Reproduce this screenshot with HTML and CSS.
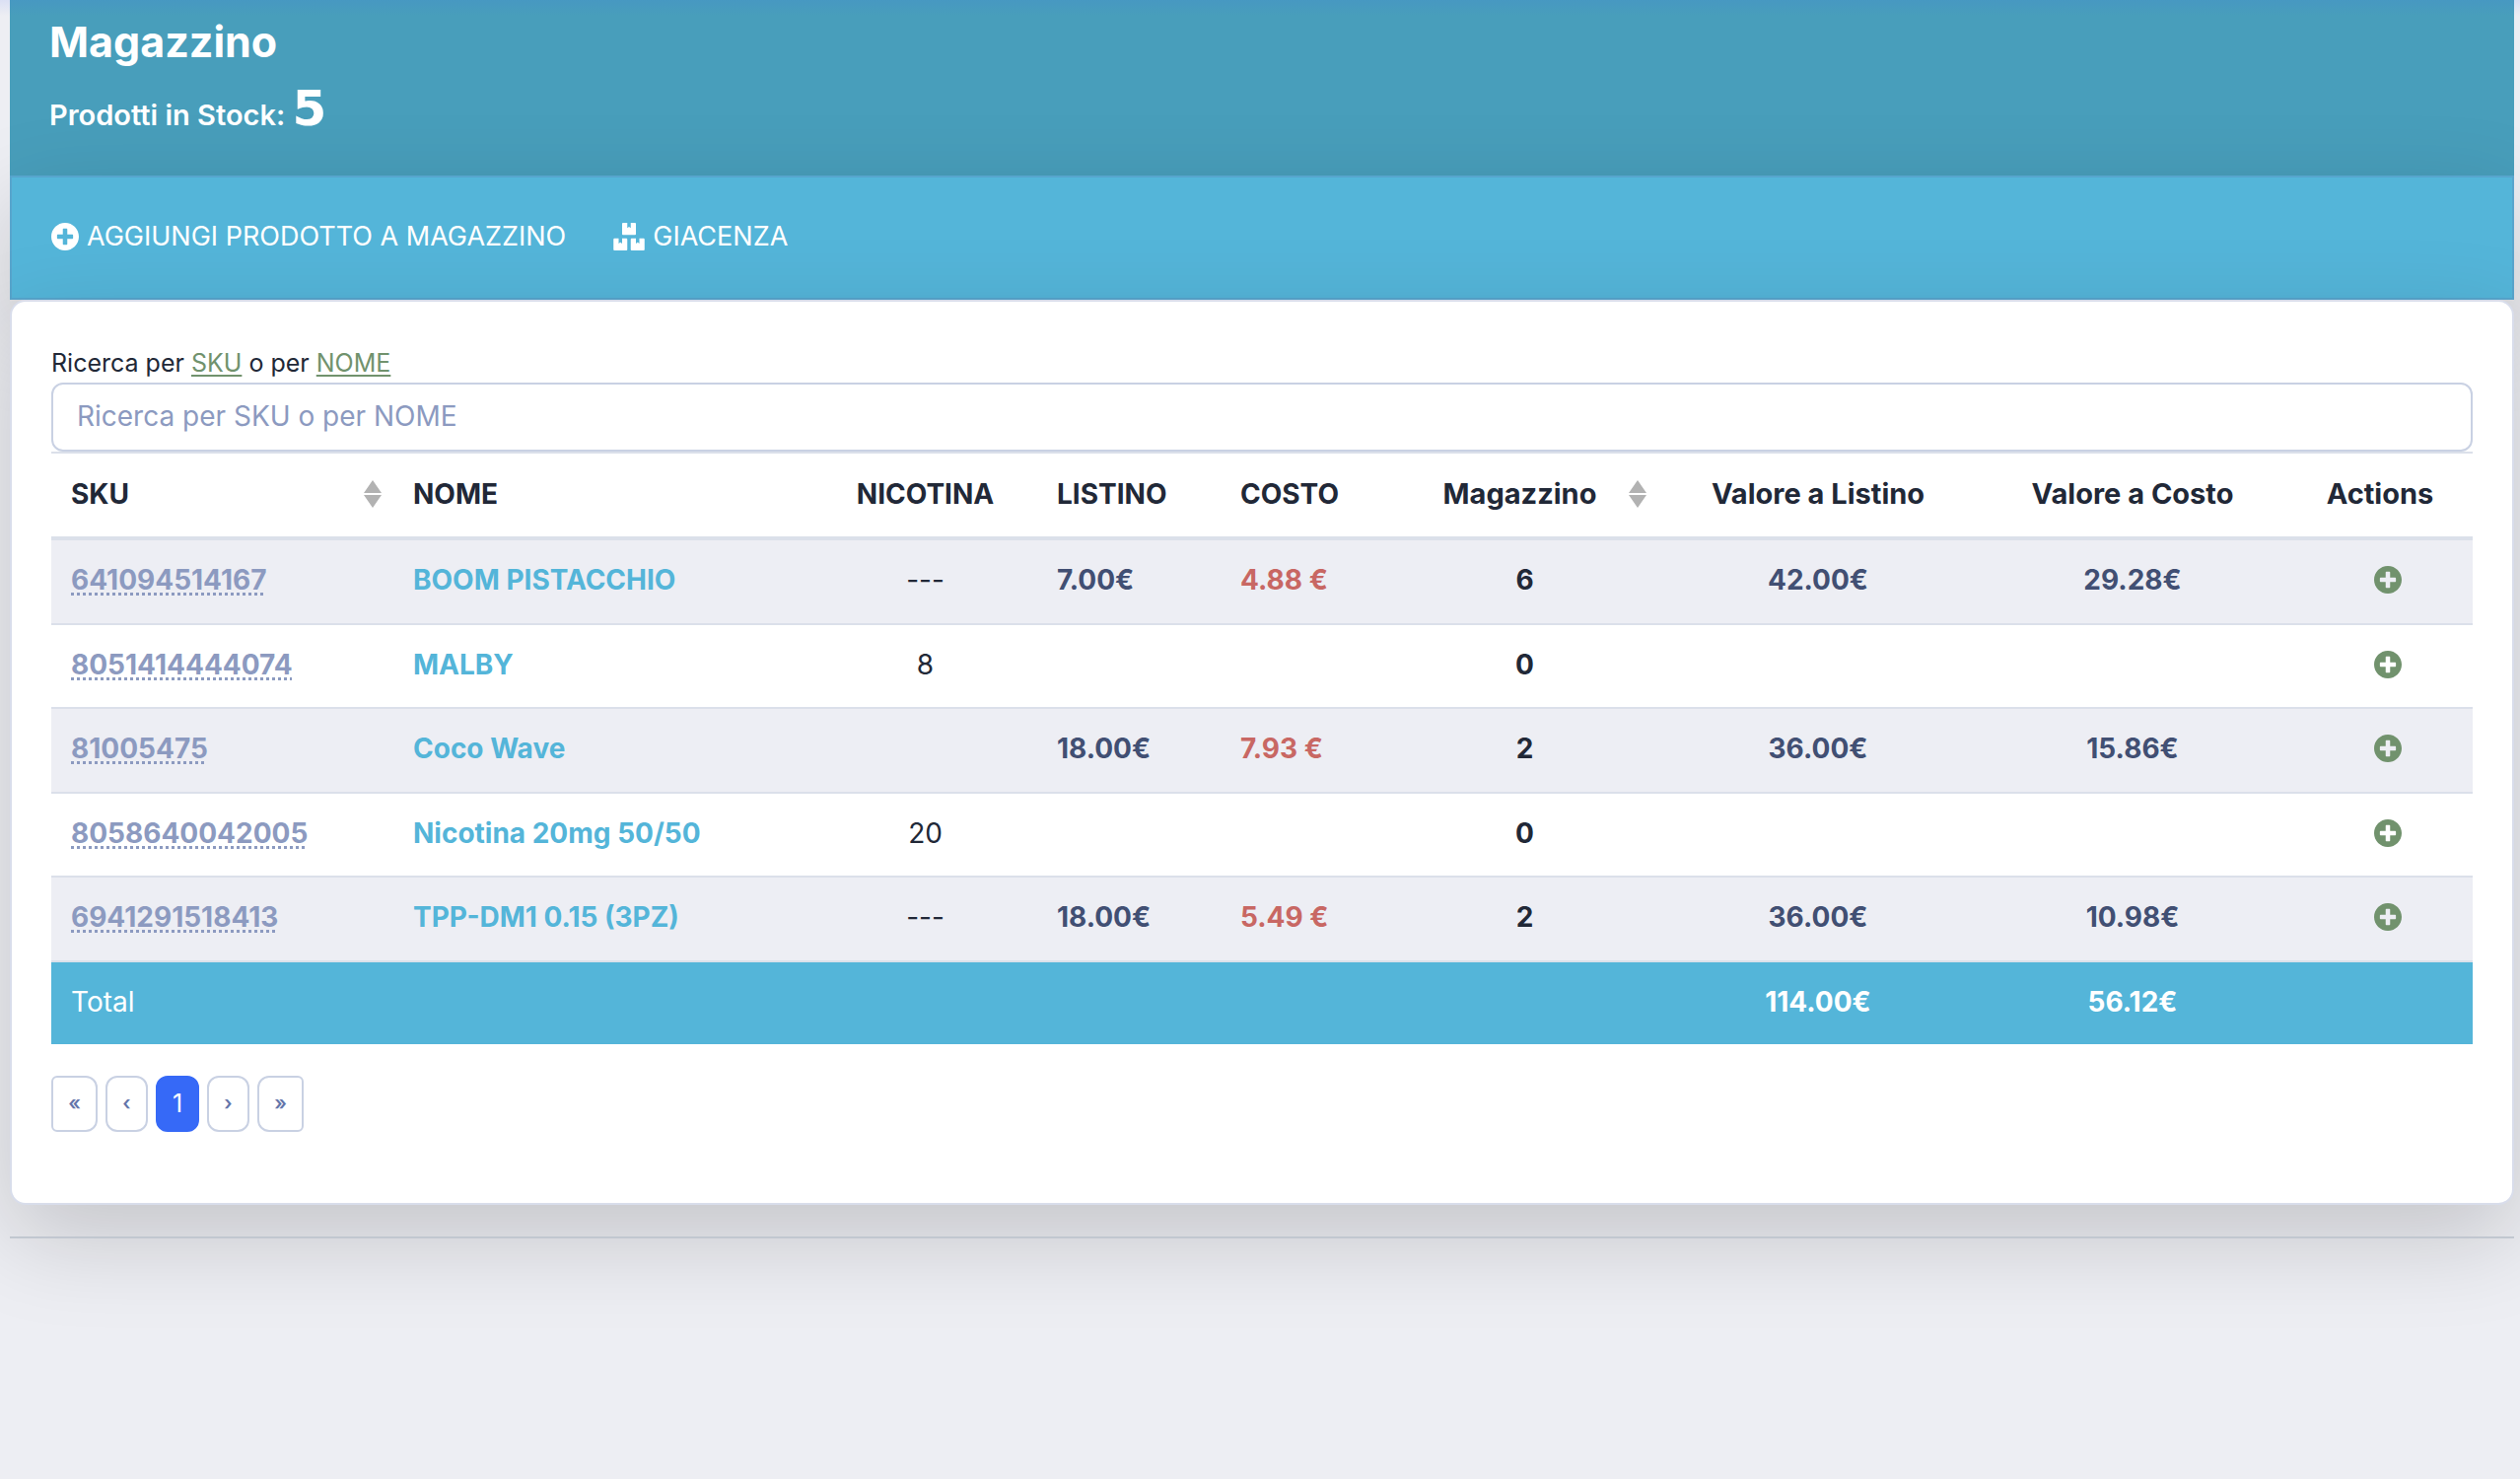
FILE: index.html
```html
<!DOCTYPE html>
<html lang="it">
<head>
<meta charset="utf-8">
<title>Magazzino</title>
<link rel="stylesheet" href="styles.css">
</head>
<body>
<svg class="sprite" aria-hidden="true">
  <symbol id="plus" viewBox="8 8 496 496"><path d="M256 8C119 8 8 119 8 256s111 248 248 248 248-111 248-248S393 8 256 8zm144 276c0 6.600-5.400 12-12 12h-92v92c0 6.600-5.400 12-12 12h-56c-6.600 0-12-5.400-12-12v-92h-92c-6.600 0-12-5.400-12-12v-56c0-6.600 5.400-12 12-12h92v-92c0-6.600 5.400-12 12-12h56c6.600 0 12 5.400 12 12v92h92c6.600 0 12 5.400 12 12v56z"/></symbol>
  <symbol id="boxes" viewBox="0 0 576 512"><path d="M560 288h-80v96l-32-21.300-32 21.300v-96h-80c-8.800 0-16 7.200-16 16v192c0 8.800 7.200 16 16 16h224c8.800 0 16-7.200 16-16V304c0-8.800-7.200-16-16-16zm-384-64h224c8.800 0 16-7.200 16-16V16c0-8.800-7.200-16-16-16h-80v96l-32-21.300L256 96V0h-80c-8.800 0-16 7.200-16 16v192c0 8.800 7.200 16 16 16zm64 64h-80v96l-32-21.300L96 384v-96H16c-8.800 0-16 7.200-16 16v192c0 8.800 7.200 16 16 16h224c8.800 0 16-7.200 16-16V304c0-8.800-7.200-16-16-16z"/></symbol>
  <symbol id="sort" viewBox="0 0 18 28"><path d="M9 0l9 13H0zM0 15h18L9 28z"/></symbol>
</svg>
<main class="page">
  <header class="hero">
    <h1 class="hero-title">Magazzino</h1>
    <p class="hero-stock">Prodotti in Stock: <span class="hero-count">5</span></p>
  </header>
  <nav class="toolbar">
    <a class="tool" href="#"><svg class="icon"><use href="#plus"/></svg>AGGIUNGI PRODOTTO A MAGAZZINO</a>
    <a class="tool" href="#"><svg class="icon icon-wide"><use href="#boxes"/></svg>GIACENZA</a>
  </nav>
  <section class="card">
    <label class="search-label" for="search">Ricerca per <u class="key">SKU</u> o per <u class="key">NOME</u></label>
    <input class="search" id="search" type="text" placeholder="Ricerca per SKU o per NOME">
    <table class="stock">
      <colgroup><col class="c-sku"><col class="c-name"><col class="c-nic"><col class="c-list"><col class="c-cost"><col class="c-qty"><col class="c-vlist"><col class="c-vcost"><col class="c-act"></colgroup>
      <thead>
        <tr>
          <th><div class="sortable">SKU<svg class="sort"><use href="#sort"/></svg></div></th>
          <th>NOME</th><th class="mid">NICOTINA</th><th>LISTINO</th><th>COSTO</th>
          <th class="mid wide"><div class="sortable"><span class="grow">Magazzino</span><svg class="sort"><use href="#sort"/></svg></div></th>
          <th class="mid wide">Valore a Listino</th><th class="mid wide">Valore a Costo</th><th class="mid wide">Actions</th>
        </tr>
      </thead>
      <tbody>
        <tr><td><abbr class="sku" title="SKU">641094514167</abbr></td><td><a class="name" href="#">BOOM PISTACCHIO</a></td><td class="mid">---</td><td class="price">7.00€</td><td class="cost">4.88 €</td><td class="mid qty">6</td><td class="mid price">42.00€</td><td class="mid price">29.28€</td><td class="mid"><button class="add" aria-label="Aggiungi"><svg class="icon"><use href="#plus"/></svg></button></td></tr>
        <tr><td><abbr class="sku" title="SKU">8051414444074</abbr></td><td><a class="name" href="#">MALBY</a></td><td class="mid">8</td><td></td><td></td><td class="mid qty">0</td><td></td><td></td><td class="mid"><button class="add" aria-label="Aggiungi"><svg class="icon"><use href="#plus"/></svg></button></td></tr>
        <tr><td><abbr class="sku" title="SKU">81005475</abbr></td><td><a class="name" href="#">Coco Wave</a></td><td></td><td class="price">18.00€</td><td class="cost">7.93 €</td><td class="mid qty">2</td><td class="mid price">36.00€</td><td class="mid price">15.86€</td><td class="mid"><button class="add" aria-label="Aggiungi"><svg class="icon"><use href="#plus"/></svg></button></td></tr>
        <tr><td><abbr class="sku" title="SKU">8058640042005</abbr></td><td><a class="name" href="#">Nicotina 20mg 50/50</a></td><td class="mid">20</td><td></td><td></td><td class="mid qty">0</td><td></td><td></td><td class="mid"><button class="add" aria-label="Aggiungi"><svg class="icon"><use href="#plus"/></svg></button></td></tr>
        <tr><td><abbr class="sku" title="SKU">6941291518413</abbr></td><td><a class="name" href="#">TPP-DM1 0.15 (3PZ)</a></td><td class="mid">---</td><td class="price">18.00€</td><td class="cost">5.49 €</td><td class="mid qty">2</td><td class="mid price">36.00€</td><td class="mid price">10.98€</td><td class="mid"><button class="add" aria-label="Aggiungi"><svg class="icon"><use href="#plus"/></svg></button></td></tr>
      </tbody>
      <tfoot>
        <tr><td>Total</td><td></td><td></td><td></td><td></td><td></td><td class="mid sum">114.00€</td><td class="mid sum">56.12€</td><td></td></tr>
      </tfoot>
    </table>
    <nav class="pager" aria-label="Pagine">
      <button class="pg pg-end">«</button><button class="pg">‹</button><button class="pg pg-on">1</button><button class="pg">›</button><button class="pg pg-end">»</button>
    </nav>
  </section>
  <hr class="rule">
</main>
</body>
</html>
```
FILE: styles.css
```css
* { box-sizing: border-box; }
body {
  margin: 0;
  min-height: 100vh;
  background: #edeef3;
  color: #212837;
  font-family: Inter, "Noto Sans", sans-serif;
  font-size: 28px;
  line-height: 40px;
}
/* soft blue glow under the window's top edge */
body::before {
  content: "";
  position: absolute;
  inset: 0 0 auto;
  height: 16px;
  background: linear-gradient(rgba(60, 100, 255, .1), rgba(60, 100, 255, 0));
}
.sprite { position: absolute; width: 0; height: 0; }
.page { padding: 0 6px 0 10px; overflow: hidden; min-height: 100vh; }
.hero {
  height: 178px;
  padding: 16px 40px 0;
  background: #489ebb;
  color: #fff;
}
.hero-title { margin: 0; font-size: 43px; line-height: 52px; font-weight: 700; }
.hero-stock { margin: 14px 0 0; font-size: 29px; line-height: 56px; font-weight: 600; }
.hero-count { font-family: "DejaVu Sans", sans-serif; font-size: 50px; font-weight: 700; }
.toolbar {
  display: flex;
  align-items: center;
  gap: 48px;
  height: 126px;
  padding: 0 40px 2px;
  border: 2px solid #57a5cd;
  background: #54b5d9;
  box-shadow: 0 32px 96px rgba(0, 0, 0, .175);
}
.tool { display: flex; align-items: center; gap: 8px; color: #fff; font-size: 27px; text-decoration: none; }
.icon { width: 28px; height: 28px; fill: currentColor; display: block; }
.icon-wide { width: 32px; }
.card {
  padding: 40px 40px 72px;
  border: 2px solid #d8ddeb;
  border-radius: 16px;
  background: #fff;
  box-shadow: 0 32px 96px rgba(0, 0, 0, .175);
}
.search-label { display: block; height: 42px; font-size: 25px; line-height: 44px; }
.key { color: #71926d; text-underline-offset: 3px; text-decoration-thickness: 2px; }
.search {
  display: block;
  width: 100%;
  height: 70px;
  padding: 0 24px 2px;
  border: 2px solid #c9d1e3;
  border-radius: 12px;
  background: #fff;
  font: inherit;
}
.search::placeholder { color: #8c9ac0; opacity: 1; }
.stock { width: 100%; table-layout: fixed; border-collapse: separate; border-spacing: 0; }
.c-sku { width: 347px; }
.c-name { width: 426px; }
.c-nic { width: 227px; }
.c-list { width: 186px; }
.c-cost { width: 173px; }
.c-qty { width: 271px; }
.c-vlist { width: 324px; }
.c-vcost { width: 314px; }
.c-act { width: 188px; }
.stock th, .stock td { padding: 0 20px 4px; text-align: left; white-space: nowrap; }
.stock th { height: 90px; padding-bottom: 2px; border-top: 2px solid #dbe0ea; border-bottom: 4px solid #dbe0ea; font-weight: 700; }
.stock .wide { font-size: 29px; }
.stock tbody td { height: 85px; border-bottom: 2px solid #dbe0ea; }
.stock tbody tr:nth-child(odd) td { height: 86px; background: #edeef4; }
.stock tfoot td { height: 83px; background: #54b5d9; color: #fff; }
.stock .mid { text-align: center; }
.sortable { display: flex; align-items: center; justify-content: space-between; margin-right: -8px; }
.grow { flex: 1; }
.sort { width: 18px; height: 28px; fill: #b2b2b2; }
.sku { color: #8c9ac0; font-weight: 700; text-decoration: underline dotted 3px; text-underline-offset: 3px; text-decoration-skip-ink: none; }
.name { color: #54b5d9; font-weight: 700; text-decoration: none; }
.price { color: #414f73; font-weight: 700; }
.cost { color: #c86763; font-weight: 700; }
.qty, .sum { font-weight: 700; }
.add { display: block; margin: 0 auto; padding: 0 0 0 16px; border: 0; background: none; color: #71926d; }
.pager { display: flex; gap: 8px; margin-top: 32px; }
.pg {
  width: 43px;
  height: 57px;
  padding: 0 0 2px;
  border: 2px solid #c9d1e3;
  border-radius: 12px;
  background: #fff;
  color: #6375aa;
  font: inherit;
  font-size: 20px;
  font-weight: 600;
}
.pg-end { width: 47px; }
.pg:first-child { border-radius: 6px 12px 12px 6px; }
.pg:last-child { border-radius: 12px 6px 6px 12px; }
.pg-on { width: 44px; border-color: #3669f7; background: #3669f7; color: #fff; font-size: 25px; font-weight: 400; }
.rule { margin: 32px 0 0; border: 0; border-top: 2px solid #c1c7d0; }
```
